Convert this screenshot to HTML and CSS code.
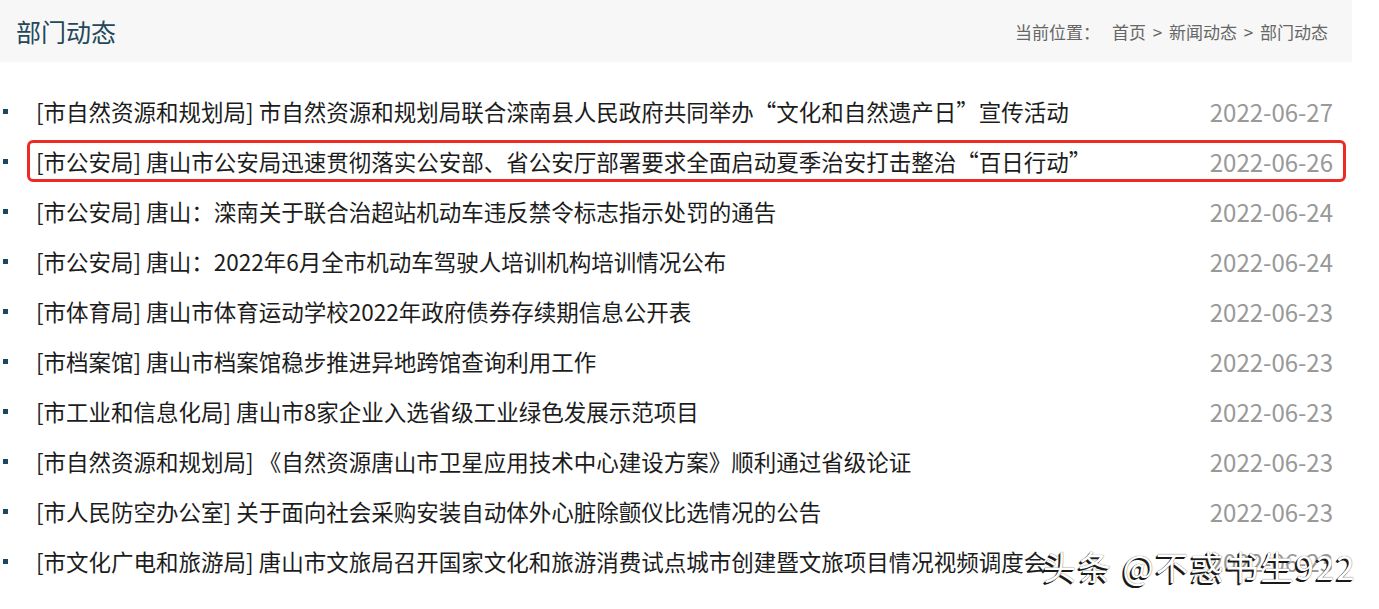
FILE: index.html
```html
<!DOCTYPE html>
<html lang="zh-CN">
<head>
<meta charset="utf-8">
<title>部门动态</title>
<link rel="stylesheet" href="styles.css">
</head>
<body>
<div class="wrap">
  <div class="head">
    <h2 class="title">部门动态</h2>
    <div class="crumb"><span class="crumb-label">当前位置：</span><span>首页 &gt; 新闻动态 &gt; 部门动态</span></div>
  </div>
  <ul class="list">
    <li class="row"><span class="dot"></span><div class="item"><span class="txt">[市自然资源和规划局] 市自然资源和规划局联合滦南县人民政府共同举办“文化和自然遗产日”宣传活动</span><span class="date">2022-06-27</span></div></li>
    <li class="row"><span class="dot"></span><div class="item hl"><span class="txt">[市公安局] 唐山市公安局迅速贯彻落实公安部、省公安厅部署要求全面启动夏季治安打击整治“百日行动”</span><span class="date">2022-06-26</span></div></li>
    <li class="row"><span class="dot"></span><div class="item"><span class="txt">[市公安局] 唐山：滦南关于联合治超站机动车违反禁令标志指示处罚的通告</span><span class="date">2022-06-24</span></div></li>
    <li class="row"><span class="dot"></span><div class="item"><span class="txt">[市公安局] 唐山：2022年6月全市机动车驾驶人培训机构培训情况公布</span><span class="date">2022-06-24</span></div></li>
    <li class="row"><span class="dot"></span><div class="item"><span class="txt">[市体育局] 唐山市体育运动学校2022年政府债券存续期信息公开表</span><span class="date">2022-06-23</span></div></li>
    <li class="row"><span class="dot"></span><div class="item"><span class="txt">[市档案馆] 唐山市档案馆稳步推进异地跨馆查询利用工作</span><span class="date">2022-06-23</span></div></li>
    <li class="row"><span class="dot"></span><div class="item"><span class="txt">[市工业和信息化局] 唐山市8家企业入选省级工业绿色发展示范项目</span><span class="date">2022-06-23</span></div></li>
    <li class="row"><span class="dot"></span><div class="item"><span class="txt">[市自然资源和规划局] 《自然资源唐山市卫星应用技术中心建设方案》顺利通过省级论证</span><span class="date">2022-06-23</span></div></li>
    <li class="row"><span class="dot"></span><div class="item"><span class="txt">[市人民防空办公室] 关于面向社会采购安装自动体外心脏除颤仪比选情况的公告</span><span class="date">2022-06-23</span></div></li>
    <li class="row"><span class="dot"></span><div class="item"><span class="txt">[市文化广电和旅游局] 唐山市文旅局召开国家文化和旅游消费试点城市创建暨文旅项目情况视频调度会</span><span class="date">2022-06-23</span></div></li>
  </ul>
</div>
<div class="mark">头条 @不惑书生922</div>
</body>
</html>
```

FILE: styles.css
```css
html, body {
  margin: 0;
  padding: 0;
  background: #ffffff;
  font-family: "Noto Sans CJK SC", "Noto Sans", sans-serif;
  overflow: hidden;
}
.wrap {
  width: 1352px;
}
.head {
  height: 62px;
  background: #f7f7f7;
  display: flex;
  align-items: center;
  justify-content: space-between;
  padding: 0 24px 0 16px;
}
.title {
  margin: 0;
  font-size: 25px;
  font-weight: normal;
  color: #24485a;
  line-height: 1;
}
.crumb {
  font-size: 17px;
  color: #666666;
  word-spacing: 3px;
}
.crumb-label {
  margin-right: 12px;
}
.list {
  list-style: none;
  margin: 24px 0 0 0;
  padding: 0;
}
.row {
  height: 50px;
  display: flex;
  align-items: center;
}
.dot {
  width: 5px;
  height: 5px;
  background: #1b4760;
  margin-left: 3px;
  margin-right: 19px;
  flex: none;
}
.item {
  flex: 1;
  margin-right: 6px;
  height: 42px;
  box-sizing: border-box;
  border: 3px solid transparent;
  border-radius: 6px;
  padding: 0 10px 0 6px;
  display: flex;
  align-items: center;
  justify-content: space-between;
}
.item.hl {
  border-color: #ee2a24;
}
.txt {
  font-size: 22.5px;
  color: #1c1c1c;
  white-space: nowrap;
}
.date {
  font-size: 24px;
  color: #999999;
  white-space: nowrap;
}
.mark {
  position: absolute;
  left: 1043px;
  top: 547px;
  font-size: 33px;
  letter-spacing: 2px;
  line-height: 1.2;
  color: #ffffff;
  white-space: nowrap;
  text-shadow: -2px 2px 0 #1a1a1a, -1px 1px 0 #333333, 0 0 1px #333333;
}
```
